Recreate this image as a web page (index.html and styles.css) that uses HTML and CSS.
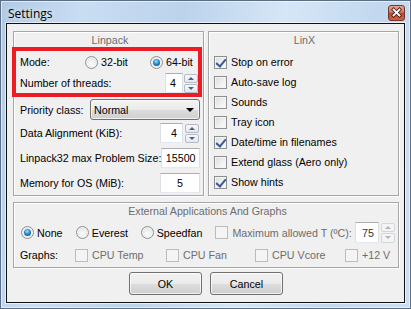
FILE: index.html
```html
<!DOCTYPE html>
<html>
<head>
<meta charset="utf-8">
<title>Settings</title>
<link rel="stylesheet" href="styles.css">
</head>
<body>
<div class="window">
  <div class="titlebar">
    <span class="title">Settings</span>
    <div class="close">
      <svg width="17" height="16" viewBox="0 0 17 16">
        <defs>
          <linearGradient id="cg" x1="0" y1="0" x2="0" y2="1">
            <stop offset="0" stop-color="#e9a99a"/>
            <stop offset="0.45" stop-color="#d7735d"/>
            <stop offset="0.5" stop-color="#c5452c"/>
            <stop offset="1" stop-color="#d4603f"/>
          </linearGradient>
        </defs>
        <rect x="0.5" y="0.5" width="16" height="15" rx="2.5" fill="url(#cg)" stroke="#6b3a30"/>
        <path d="M5.5 4.5 L11.5 10.5 M11.5 4.5 L5.5 10.5" stroke="#3a1d18" stroke-width="3.4" stroke-linecap="square"/>
        <path d="M5.5 4.5 L11.5 10.5 M11.5 4.5 L5.5 10.5" stroke="#ffffff" stroke-width="1.8" stroke-linecap="square"/>
      </svg>
    </div>
  </div>
  <div class="client">
    <div class="groups">
      <div class="group linpack">
        <div class="gtitle">Linpack</div>
        <div class="row r-mode">
          <span class="cell c-mode">Mode:</span>
          <span class="cell c-32"><span class="radio"></span>32-bit</span>
          <span class="cell"><span class="radio on"></span>64-bit</span>
        </div>
        <div class="row r-threads">
          <span class="grow">Number of threads:</span>
          <span class="spin sp-threads">
            <span class="edit e-threads">4</span>
            <span class="updown"><span class="ud"><span class="tri up"></span></span><span class="ud"><span class="tri down"></span></span></span>
          </span>
        </div>
        <div class="row r-prio">
          <span class="grow">Priority class:</span>
          <span class="combo">Normal<span class="arrow"></span></span>
        </div>
        <div class="row r-align">
          <span class="grow">Data Alignment (KiB):</span>
          <span class="spin sp-align">
            <span class="edit e-align">4</span>
            <span class="updown"><span class="ud"><span class="tri up"></span></span><span class="ud"><span class="tri down"></span></span></span>
          </span>
        </div>
        <div class="row r-size">
          <span class="grow">Linpack32 max Problem Size:</span>
          <span class="edit e-wide">15500</span>
        </div>
        <div class="row r-mem">
          <span class="grow">Memory for OS (MiB):</span>
          <span class="edit e-wide">5</span>
        </div>
      </div>
      <div class="group linx">
        <div class="gtitle">LinX</div>
        <div class="checks">
          <div class="crow"><span class="check on"></span>Stop on error</div>
          <div class="crow"><span class="check"></span>Auto-save log</div>
          <div class="crow"><span class="check"></span>Sounds</div>
          <div class="crow"><span class="check"></span>Tray icon</div>
          <div class="crow"><span class="check on"></span>Date/time in filenames</div>
          <div class="crow"><span class="check"></span>Extend glass (Aero only)</div>
          <div class="crow"><span class="check on"></span>Show hints</div>
        </div>
      </div>
    </div>
    <div class="group ext">
      <div class="gtitle">External Applications And Graphs</div>
      <div class="row r-apps">
        <span class="cell c-none"><span class="radio on"></span>None</span>
        <span class="cell c-everest"><span class="radio"></span>Everest</span>
        <span class="cell c-speedfan"><span class="radio"></span>Speedfan</span>
        <span class="cell c-max dis"><span class="check dis"></span>Maximum allowed T (ºC):</span>
        <span class="spin sp-temp">
          <span class="edit e-temp">75</span>
          <span class="updown dis"><span class="ud"><span class="tri up"></span></span><span class="ud"><span class="tri down"></span></span></span>
        </span>
      </div>
      <div class="row r-graphs">
        <span class="cell c-graphs">Graphs:</span>
        <span class="cell c-temp dis"><span class="check dis"></span>CPU Temp</span>
        <span class="cell c-fan dis"><span class="check dis"></span>CPU Fan</span>
        <span class="cell c-vcore dis"><span class="check dis"></span>CPU Vcore</span>
        <span class="cell dis"><span class="check dis"></span>+12 V</span>
      </div>
    </div>
    <div class="buttons">
      <span class="btn">OK</span>
      <span class="btn">Cancel</span>
    </div>
  </div>
  <div class="mark"></div>
</div>
</body>
</html>
```
FILE: styles.css
```css
* { box-sizing: border-box; margin: 0; padding: 0; }
html, body { width: 411px; height: 309px; overflow: hidden; background: #fff; }
body { font-family: "Liberation Sans", Arial, sans-serif; font-size: 10.7px; color: #000; }

.window {
  position: relative;
  width: 411px;
  height: 309px;
  border: 1px solid #5c6f86;
  padding: 0 5px 5px 5px;
  display: flex;
  flex-direction: column;
  background: linear-gradient(100deg, #b0c9e4 0%, #c9ddf2 18%, #bcd3ec 40%, #d6e6f6 62%, #c2d8ef 82%, #cddff2 100%);
  box-shadow: inset 0 0 0 1px rgba(255,255,255,0.55);
}

.titlebar {
  height: 22px;
  display: flex;
  justify-content: space-between;
  align-items: flex-start;
}
.title {
  font-family: "Open Sans", "Noto Sans", sans-serif;
  font-size: 12px;
  line-height: 16px;
  margin: 5px 0 0 2px;
  color: #000;
  text-shadow: 0 0 6px rgba(255,255,255,0.9);
}
.close { margin-top: 4px; height: 16px; width: 17px; }
.close svg { display: block; }

.client {
  flex: 1;
  border: 1px solid #111;
  background: #f0f0f0;
  padding: 7px 5px 0 6px;
  display: flex;
  flex-direction: column;
  box-shadow: 0 0 0 1px rgba(255,255,255,0.6);
}

.groups { display: flex; gap: 4px; height: 165px; }

.group {
  border: 1px solid #a6a6a6;
  box-shadow: inset 1px 1px 0 #fff, 1px 1px 0 #fff;
  display: flex;
  flex-direction: column;
}
.linpack { width: 191px; padding: 0 3px 0 6px; }
.linx { width: 191px; padding: 0 3px 0 5px; }
.ext { height: 66px; margin-top: 6px; padding: 0 3px 0 6px; }

.gtitle {
  height: 16px;
  line-height: 16px;
  text-align: center;
  color: #6d6d6d;
}

.row { display: flex; align-items: center; height: 20px; white-space: nowrap; }
.cell { display: flex; align-items: center; }
.grow { flex: 1; }

.r-mode { margin-top: 4px; }
.r-threads { margin-top: 1px; }
.r-prio { margin-top: 6px; height: 21px; }
.r-align { margin-top: 3px; }
.r-size { margin-top: 5px; }
.r-mem { margin-top: 5px; }

.c-mode { width: 65px; }
.c-32 { width: 65px; }

.radio {
  width: 13px; height: 13px;
  border-radius: 50%;
  border: 1px solid #8d8f91;
  background: radial-gradient(circle at 50% 60%, #fdfdfd 0%, #e8e8e8 60%, #d2d2d2 100%);
  box-shadow: inset 0 0 0 1px #f4f4f4;
  margin-right: 3px;
  position: relative;
  flex: none;
}
.radio.on::after {
  content: "";
  position: absolute;
  left: 2px; top: 2px;
  width: 7px; height: 7px;
  border-radius: 50%;
  background: radial-gradient(circle at 45% 35%, #a6e3ff 0%, #3aa0dc 35%, #0d5a96 75%, #093e6d 100%);
}

.check {
  width: 13px; height: 13px;
  border: 1px solid #8e8f8f;
  background: linear-gradient(135deg, #dcdcdc 0%, #eeeeee 50%, #fbfbfb 100%);
  box-shadow: inset 0 0 0 1px #f4f4f4;
  margin-right: 4px;
  position: relative;
  flex: none;
}
.check.on::after {
  content: "";
  position: absolute;
  left: 3px; top: 0px;
  width: 4px; height: 8px;
  border-right: 2px solid #3b5a9a;
  border-bottom: 2px solid #3b5a9a;
  transform: rotate(40deg);
}
.check.dis {
  border-color: #bcbcbc;
  background: #f4f4f4;
  box-shadow: none;
}
.dis { color: #6d6d6d; }

.checks { margin-top: 4px; display: flex; flex-direction: column; }
.crow { height: 20px; display: flex; align-items: center; white-space: nowrap; }

.edit {
  display: flex;
  align-items: center;
  height: 20px;
  background: #fff;
  border: 1px solid #dbdfe6;
  border-top-color: #abadb3;
  border-bottom-color: #e3e9ef;
}
.e-threads { width: 18px; justify-content: flex-end; padding-right: 6px; }
.e-align { width: 23px; justify-content: flex-end; padding-right: 5px; }
.e-wide { width: 40px; justify-content: center; }
.e-temp { width: 24px; justify-content: flex-end; padding-right: 4px; color: #333; }

.spin { display: flex; align-items: center; gap: 1px; }
.sp-threads { margin-right: 2px; }
.sp-align { margin-right: 1px; gap: 2px; }
.sp-temp { margin-left: 0; gap: 2px; }

.updown { display: flex; flex-direction: column; gap: 1px; width: 14px; height: 19px; }
.ud {
  flex: 1;
  border: 1px solid #b5bcc7;
  border-radius: 2px;
  background: linear-gradient(#f7f8fa, #e4e7ec);
  display: flex;
  align-items: center;
  justify-content: center;
}
.tri { width: 0; height: 0; border-left: 3px solid transparent; border-right: 3px solid transparent; }
.tri.up { border-bottom: 3px solid #4d6185; }
.tri.down { border-top: 3px solid #4d6185; }
.updown.dis .ud { border-color: #d3d6da; background: #f4f4f4; }
.updown.dis .tri.up { border-bottom-color: #b0b4ba; }
.updown.dis .tri.down { border-top-color: #b0b4ba; }

.combo {
  position: relative;
  width: 110px;
  height: 21px;
  display: flex;
  align-items: center;
  padding-left: 3px;
  border: 1px solid #707070;
  border-radius: 3px;
  background: linear-gradient(#f2f2f2 0%, #ebebeb 50%, #dddddd 51%, #cfcfcf 100%);
  box-shadow: inset 0 0 0 1px rgba(255,255,255,0.7);
}
.combo .arrow {
  position: absolute;
  right: 5px; top: 8px;
  width: 0; height: 0;
  border-left: 4px solid transparent;
  border-right: 4px solid transparent;
  border-top: 4px solid #000;
}

.r-apps { margin-top: 3px; height: 21px; }
.r-apps .edit { height: 21px; }
.r-apps .updown { height: 20px; }
.r-graphs { margin-top: 2px; }
.c-none { width: 55px; margin-left: 1px; }
.c-everest { width: 65px; }
.c-speedfan { width: 75px; }
.c-max { width: 140px; }
.c-graphs { width: 55px; }
.c-temp { width: 91px; }
.c-fan { width: 89px; }
.c-vcore { width: 90px; }

.buttons {
  margin-top: 4px;
  display: flex;
  justify-content: center;
  gap: 8px;
}
.btn {
  width: 73px;
  height: 23px;
  display: flex;
  align-items: center;
  justify-content: center;
  border: 1px solid #707070;
  border-radius: 3px;
  background: linear-gradient(#f2f2f2 0%, #ebebeb 50%, #dddddd 51%, #cfcfcf 100%);
  box-shadow: inset 0 0 0 1px rgba(255,255,255,0.7);
}

.mark {
  position: absolute;
  left: 11px;
  top: 46px;
  width: 190px;
  height: 50px;
  border: 4px solid #ed1c24;
}
```
